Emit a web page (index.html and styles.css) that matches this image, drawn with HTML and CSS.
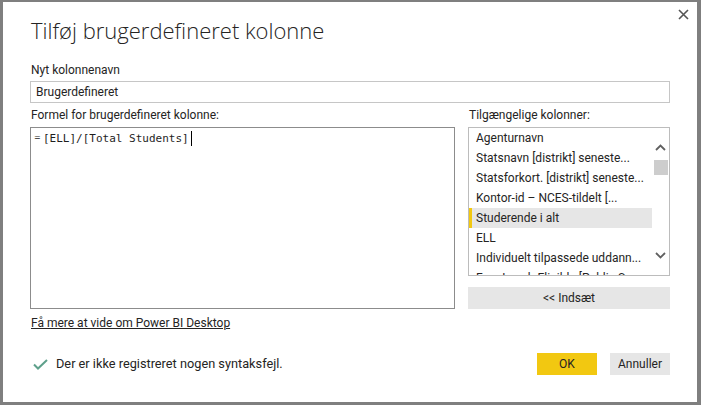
FILE: index.html
```html
<!DOCTYPE html>
<html lang="da">
<head>
<meta charset="utf-8">
<title>Tilføj brugerdefineret kolonne</title>
<link rel="stylesheet" href="styles.css">
</head>
<body>
<div class="dialog">
  <button class="close" aria-label="Luk">
    <svg width="11" height="11" viewBox="0 0 11 11"><path d="M1 1L10 10M10 1L1 10" stroke="#555" stroke-width="1.6" fill="none"/></svg>
  </button>
  <h1 class="title">Tilføj brugerdefineret kolonne</h1>
  <div class="label name-label">Nyt kolonnenavn</div>
  <div class="input">Brugerdefineret</div>
  <div class="main">
    <div class="left">
      <div class="label">Formel for brugerdefineret kolonne:</div>
      <div class="formula"><span class="eq">=</span><span class="code">[ELL]/[Total Students]</span><span class="caret"></span></div>
    </div>
    <div class="right">
      <div class="label">Tilgængelige kolonner:</div>
      <div class="list">
        <ul class="items">
          <li class="item">Agenturnavn</li>
          <li class="item">Statsnavn [distrikt] seneste...</li>
          <li class="item">Statsforkort. [distrikt] seneste...</li>
          <li class="item">Kontor-id – NCES-tildelt [...</li>
          <li class="item selected">Studerende i alt</li>
          <li class="item">ELL</li>
          <li class="item">Individuelt tilpassede uddann...</li>
          <li class="item">Free Lunch Eligible [Public Sc...</li>
        </ul>
        <div class="scrollbar">
          <svg class="chev" width="11" height="7" viewBox="0 0 11 7"><path d="M1 6L5.5 1.5L10 6" stroke="#606060" stroke-width="1.8" fill="none"/></svg>
          <div class="thumb"></div>
          <div class="track"></div>
          <svg class="chev" width="11" height="7" viewBox="0 0 11 7"><path d="M1 1L5.5 5.5L10 1" stroke="#606060" stroke-width="1.8" fill="none"/></svg>
        </div>
      </div>
      <button class="insert">&lt;&lt; Indsæt</button>
    </div>
  </div>
  <a class="link" href="#">Få mere at vide om Power BI Desktop</a>
  <div class="footer">
    <div class="status">
      <svg class="check" width="15" height="11" viewBox="0 0 15 11"><path d="M1 5.5L5 9.5L14 1" stroke="#5ea08b" stroke-width="2" fill="none"/></svg>
      <span>Der er ikke registreret nogen syntaksfejl.</span>
    </div>
    <div class="buttons">
      <button class="btn ok">OK</button>
      <button class="btn">Annuller</button>
    </div>
  </div>
</div>
</body>
</html>
```

FILE: styles.css
```css
html, body {
  margin: 0;
  padding: 0;
}
body {
  background: #7f7f7f;
  font-family: Roboto, "Liberation Sans", sans-serif;
  color: #252423;
}
.dialog {
  position: relative;
  box-sizing: border-box;
  margin: 2px 4px 3px 3px;
  height: 400px;
  background: #fff;
  padding: 0 27px;
  display: flex;
  flex-direction: column;
}
.close {
  position: absolute;
  top: 5px;
  right: 7px;
  width: 14px;
  height: 14px;
  padding: 0;
  border: 0;
  background: none;
  display: flex;
  align-items: center;
  justify-content: center;
}
.title {
  margin: 13px 0 0 1px;
  height: 30px;
  font-family: "Open Sans", sans-serif;
  font-size: 22px;
  font-weight: 300;
  line-height: 30px;
  color: #252423;
}
.label {
  font-size: 12px;
  line-height: 16px;
  height: 16px;
  padding-left: 1px;
  white-space: nowrap;
}
.name-label {
  margin-top: 17px;
}
.input {
  box-sizing: border-box;
  margin-top: 3px;
  height: 22px;
  border: 1px solid #c6c6c6;
  padding: 0 5px;
  font-size: 12px;
  line-height: 20px;
}
.main {
  margin-top: 4px;
  display: grid;
  grid-template-columns: 425px 202px;
  column-gap: 13px;
}
.formula {
  box-sizing: border-box;
  margin-top: 4px;
  height: 182px;
  border: 1px solid #8c8c8c;
  padding: 3px 0 0 3px;
  display: flex;
  align-items: flex-start;
}
.eq {
  font-family: "DejaVu Sans", sans-serif;
  font-size: 8px;
  line-height: 10px;
  margin-top: 2px;
  width: 9px;
}
.code {
  font-family: "DejaVu Sans Mono", monospace;
  font-size: 11px;
  line-height: 16px;
  color: #1e1e1e;
}
.caret {
  width: 1px;
  height: 15px;
  margin-left: 2px;
  background: #000;
}
.list {
  box-sizing: border-box;
  margin-top: 4px;
  height: 149px;
  border: 1px solid #bcbcbc;
  display: flex;
  overflow: hidden;
}
.items {
  list-style: none;
  margin: 0;
  padding: 0;
  width: 183px;
}
.item {
  box-sizing: border-box;
  height: 20px;
  line-height: 20px;
  font-size: 12px;
  padding-left: 7px;
  white-space: nowrap;
  overflow: hidden;
}
.item.selected {
  background: #e6e6e6;
  border-left: 3px solid #f2c811;
  padding-left: 4px;
}
.scrollbar {
  width: 17px;
  display: flex;
  flex-direction: column;
  align-items: center;
  padding: 16px 0;
  box-sizing: border-box;
}
.thumb {
  width: 14px;
  height: 15px;
  margin-top: 9px;
  background: #cdcdcd;
}
.track {
  flex: 1;
}
.insert {
  box-sizing: border-box;
  margin-top: 11px;
  width: 100%;
  height: 22px;
  border: 0;
  padding: 0;
  background: #e6e6e6;
  font-family: inherit;
  font-size: 12px;
  color: #252423;
}
.link {
  margin-top: 6px;
  align-self: flex-start;
  font-size: 12px;
  line-height: 16px;
  color: #252423;
  text-decoration: underline;
  padding-left: 1px;
}
.footer {
  margin-top: 22px;
  height: 22px;
  display: flex;
  align-items: center;
  justify-content: space-between;
}
.status {
  display: flex;
  align-items: center;
  gap: 8px;
  padding-left: 3px;
  font-size: 12.75px;
  line-height: 16px;
}
.buttons {
  display: flex;
  gap: 13px;
}
.btn {
  width: 60px;
  height: 22px;
  border: 0;
  padding: 0;
  background: #e6e6e6;
  font-family: inherit;
  font-size: 12px;
  color: #252423;
}
.btn.ok {
  background: #f2c811;
}
```
